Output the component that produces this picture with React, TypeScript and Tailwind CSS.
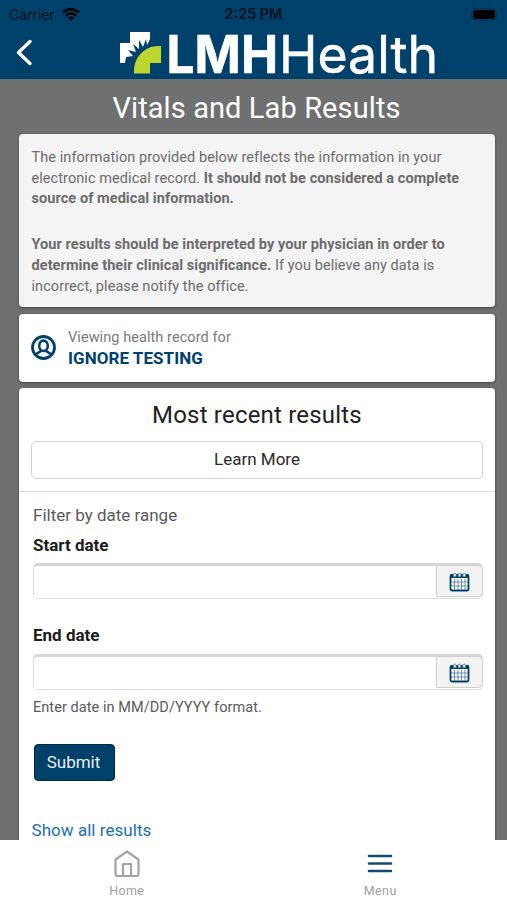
import { ReactNode } from "react";

function Logo() {
  return (
    <svg className="absolute left-[118px] top-[28px] overflow-visible" width="330" height="50" viewBox="0 0 330 50">
      <path
        fill="#fff"
        d="M12 4h20v7l-3 6-1-6-3 8-4-7v9l-6-5 3 8-8-2 5 6-7 1-1 6H2V15h10z"
      />
      <path fill="#bfd52f" d="M16 45.500V43C16 29 27 18 40 18h3v17H32v10.500z" />
      <text
        x="48.500"
        y="45"
        fill="#fff"
        stroke="#fff"
        strokeWidth=".6"
        fontFamily="Inter"
        fontWeight="700"
        fontSize="52"
        textLength="111.500"
        lengthAdjust="spacingAndGlyphs"
      >
        LMH
      </text>
      <text
        x="161"
        y="45"
        fill="#fff"
        stroke="#fff"
        strokeWidth=".5"
        fontFamily="Inter"
        fontWeight="400"
        fontSize="52"
        textLength="159"
        lengthAdjust="spacingAndGlyphs"
      >
        Health
      </text>
    </svg>
  );
}

function Header() {
  return (
    <header className="relative h-[79px] shrink-0 bg-[#00416b]">
      <div className="flex h-[27px] items-center justify-between pl-[9px] pr-[10px] pt-px text-[14px] text-[#05111b]">
        <div className="flex w-[120px] items-center gap-[7px] font-['Inter']">
          <span>Carrier</span>
          <svg width="18" height="14" viewBox="0 0 18 14" fill="none" stroke="#000" strokeWidth="2.500">
            <path d="M1 5.500C5.500 1 12.500 1 17 5.500" />
            <path d="M4 8.500c3-2.800 7-2.800 10 0" />
            <path d="M9 13.500 6 10.700c1.800-1.600 4.200-1.600 6 0z" fill="#000" stroke="none" />
          </svg>
        </div>
        <span className="ml-px font-['Inter'] text-[14.4px] font-semibold">2:25 PM</span>
        <div className="flex w-[120px] justify-end">
          <span className="flex h-[13px] w-[26px] items-center justify-center rounded-[4px] border border-[#00335a]">
            <span className="h-[9px] w-[22px] rounded-[2px] bg-black" />
          </span>
        </div>
      </div>
      <svg
        className="absolute left-[14px] top-[38px]"
        width="20"
        height="30"
        viewBox="0 0 20 30"
        fill="none"
        stroke="#fff"
        strokeWidth="3.400"
        strokeLinecap="round"
        strokeLinejoin="round"
      >
        <path d="M16 3.500 4.500 14.500 16 25.500" />
      </svg>
      <Logo />
    </header>
  );
}

function Card({ className, children }: { className: string; children: ReactNode }) {
  return (
    <div className={`ml-[19px] w-[476px] rounded-[4px] shadow-[0_1px_3px_rgba(0,0,0,0.4)] ${className}`}>
      {children}
    </div>
  );
}

function CalendarIcon() {
  return (
    <svg width="21" height="21" viewBox="0 0 21 21">
      <rect x="1.500" y="4" width="18" height="15.500" rx="1.500" fill="#fff" stroke="#00416b" strokeWidth="1.800" />
      <path d="M1.500 3h18v4h-18z" fill="#00416b" />
      <path d="M5.500 8v11M9 8v11M12.500 8v11M16 8v11M2 11h17M2 15h17" stroke="#5f87a3" strokeWidth=".9" />
      <path
        d="M4.500 5.500v-2a1.300 1.300 0 0 1 2.600 0v2M9.200 5.500v-2a1.300 1.300 0 0 1 2.600 0v2M13.900 5.500v-2a1.300 1.300 0 0 1 2.600 0v2"
        fill="#e8eef2"
        stroke="#4d7c9b"
        strokeWidth=".8"
      />
    </svg>
  );
}

function DateInput() {
  return (
    <div className="flex h-[36px] w-[450px] rounded-[5px] border border-t-[3px] border-[#dedede] border-t-[#d6d6d6] bg-white">
      <input className="min-w-0 flex-1 outline-none" type="text" />
      <button className="-mr-px -mt-px flex h-[32px] w-[47px] items-center justify-center rounded-r-[5px] border border-[#d0d0d0] bg-[#f3f3f3]">
        <CalendarIcon />
      </button>
    </div>
  );
}

export default function App() {
  return (
    <div className="flex h-[900px] w-[507px] flex-col overflow-hidden bg-[#6f7170] font-['Roboto',sans-serif]">
      <Header />
      <main className="min-h-0 flex-1 overflow-hidden">
        <h1 className="h-[55px] pl-[6px] text-center text-[29px] leading-[58px] tracking-[0.1px] text-white">
          Vitals and Lab Results
        </h1>
        <Card className="h-[173px] bg-[#f4f4f4] pl-[12.5px] pt-[14px] text-[14.5px] leading-[20.7px] tracking-[0.07px] text-[#6c6c6c]">
          <p className="whitespace-nowrap">
            The information provided below reflects the information in your
            <br />
            electronic medical record. <b className="font-bold">It should not be considered a complete</b>
            <br />
            <b className="font-bold">source of medical information.</b>
          </p>
          <p className="mt-[25px] whitespace-nowrap">
            <b className="font-bold">Your results should be interpreted by your physician in order to</b>
            <br />
            <b className="font-bold">determine their clinical significance.</b> If you believe any data is
            <br />
            incorrect, please notify the office.
          </p>
        </Card>
        <Card className="mt-[7px] flex h-[68px] items-center bg-white pl-[12px]">
          <svg className="-mt-[2px]" width="25" height="25" viewBox="0 0 25 25" fill="none" stroke="#00416b">
            <circle cx="12.500" cy="12.500" r="11" strokeWidth="2.800" />
            <ellipse cx="12.500" cy="10.800" rx="4.300" ry="5.200" strokeWidth="2.600" />
            <path d="M5 19.500c1.500-2 3.500-2.500 5-3.500M20 19.500c-1.500-2-3.500-2.500-5-3.500" strokeWidth="2.400" />
          </svg>
          <div className="ml-[12px] leading-[21px]">
            <p className="text-[14.5px] tracking-[0.07px] text-[#7a7a7a]">Viewing health record for</p>
            <p className="text-[17px] font-bold tracking-[0.05px] text-[#00416b]">IGNORE TESTING</p>
          </div>
        </Card>
        <Card className="mt-[6px] h-[500px] bg-white">
          <div className="h-[104px] border-b border-[#dedede] px-[12px] pt-[11px]">
            <h2 className="text-center text-[24px] leading-[32px] tracking-[0.2px] text-[#212121]">
              Most recent results
            </h2>
            <button className="mt-[10px] h-[38px] w-[452px] rounded-[5px] border-[1.500px] border-[#d2d2d2] text-[17px] text-[#2b2b2b]">
              Learn More
            </button>
          </div>
          <div className="flex flex-col items-start pl-[14px] text-[#1c1c1c]">
            <p className="mt-[11px] text-[17px] leading-[24px] text-[#5a5a5a]">Filter by date range</p>
            <label className="mb-[6px] mt-[6px] text-[17px] font-bold leading-[24px]">Start date</label>
            <DateInput />
            <label className="mb-[7px] mt-[24px] text-[17px] font-bold leading-[24px]">End date</label>
            <DateInput />
            <p className="mt-[7px] text-[14.5px] leading-[22px] tracking-[0.06px] text-[#5a5a5a]">
              Enter date in MM/DD/YYYY format.
            </p>
            <button className="ml-px mt-[25px] h-[37px] w-[81px] rounded-[4px] border-[1.500px] border-[#002743] bg-[#00416b] pr-[2px] text-[17px] text-[#e8eff4]">
              Submit
            </button>
            <a className="-ml-[1.500px] mt-[37px] text-[17px] leading-[24px] tracking-[0.05px] text-[#1b6fb3]">
              Show all results
            </a>
          </div>
        </Card>
      </main>
      <nav className="grid h-[60px] shrink-0 grid-cols-2 bg-white text-[12.5px] leading-[16px] tracking-[0.4px] text-[#a0a0a0]">
        <a className="flex flex-col items-center pt-[9px]">
          <svg width="28" height="30" viewBox="0 0 28 30" fill="none" stroke="#a3a3a3" strokeWidth="2.200" strokeLinejoin="round">
            <path d="M2.500 10.500 14 2.500l11.500 8V25a2 2 0 0 1-2 2h-19a2 2 0 0 1-2-2z" />
            <path d="M10 27V15h8v12" />
          </svg>
          <span className="mt-[4px]">Home</span>
        </a>
        <a className="flex flex-col items-center pt-[9px]">
          <svg width="28" height="30" viewBox="0 0 28 30" stroke="#164a70" strokeWidth="2.600" strokeLinecap="round">
            <path d="M3 7h22M3 14.500h22M3 22h22" />
          </svg>
          <span className="mt-[4px]">Menu</span>
        </a>
      </nav>
    </div>
  );
}
